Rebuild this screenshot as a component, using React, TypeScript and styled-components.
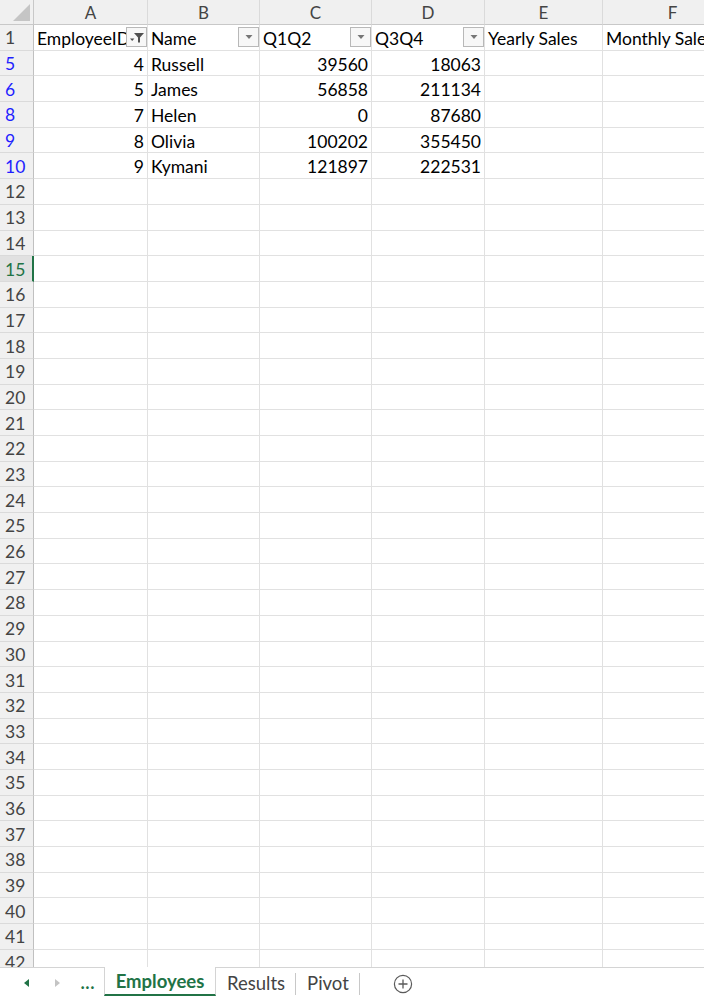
import React from "react";
import styled, { createGlobalStyle, css } from "styled-components";

const Global = createGlobalStyle`
  html, body {
    margin: 0;
    padding: 0;
    background: #ffffff;
  }
  body {
    font-family: Lato, "Open Sans", "Liberation Sans", sans-serif;
  }
`;

const Sheet = styled.div`
  display: flex;
  flex-direction: column;
  width: 704px;
  height: 999px;
  overflow: hidden;
`;

const Grid = styled.div`
  flex: 1;
  min-height: 0;
  overflow: hidden;
  display: grid;
  grid-template-columns: 34px 114px 112px 112px 113px 118px 140px;
  grid-template-rows: 25px;
  grid-auto-rows: 25.7px;
  align-content: start;
  width: 743px;
`;

const Corner = styled.div`
  position: relative;
  background: #f0f0f0;
  border-right: 1px solid #c8c8c8;
  border-bottom: 1px solid #c8c8c8;
  box-sizing: border-box;
  &::after {
    content: "";
    position: absolute;
    right: 3px;
    bottom: 3px;
    width: 0;
    height: 0;
    border-left: 17px solid transparent;
    border-bottom: 17px solid #c5c5c5;
  }
`;

const ColHead = styled.div`
  background: #f0f0f0;
  color: #444444;
  font-size: 17px;
  display: flex;
  align-items: center;
  justify-content: center;
  border-right: 1px solid #dadada;
  border-bottom: 1px solid #c8c8c8;
  box-sizing: border-box;
  padding-top: 1px;
`;

const RowHead = styled.div<{ $filtered?: boolean; $selected?: boolean }>`
  background: ${(p) => (p.$selected ? "#e1e1e1" : "#f0f0f0")};
  color: ${(p) => (p.$selected ? "#217346" : p.$filtered ? "#1f1fff" : "#444444")};
  font-size: 17.5px;
  display: flex;
  align-items: center;
  padding-left: 5px;
  padding-top: 1px;
  border-bottom: 1px solid #dadada;
  box-sizing: border-box;
  ${(p) =>
    p.$selected
      ? css`
          border-right: 2px solid #217346;
        `
      : css`
          border-right: 1px solid #c0c0c0;
        `}
`;

const Cell = styled.div<{ $num?: boolean }>`
  position: relative;
  font-size: 17.5px;
  color: #000000;
  display: flex;
  align-items: center;
  justify-content: ${(p) => (p.$num ? "flex-end" : "flex-start")};
  padding: 2px 3px 0 3px;
  border-right: 1px solid #e1e1e1;
  border-bottom: 1px solid #e1e1e1;
  box-sizing: border-box;
  white-space: nowrap;
  overflow: hidden;
`;

const FilterBtn = styled.span`
  position: absolute;
  right: 0;
  top: 2px;
  width: 21px;
  height: 20px;
  box-sizing: border-box;
  background: #f7f7f7;
  border: 1px solid #b8b8b8;
  display: flex;
  align-items: center;
  justify-content: center;
`;

const TabBar = styled.div`
  height: 32px;
  flex-shrink: 0;
  display: flex;
  align-items: stretch;
  border-top: 1px solid #d4d4d4;
  background: #ffffff;
  box-sizing: border-box;
  padding-left: 12px;
`;

const NavBtn = styled.div`
  width: 30px;
  display: flex;
  align-items: center;
  justify-content: center;
  margin-top: -1px;
`;

const More = styled.div`
  width: 32px;
  display: flex;
  align-items: center;
  justify-content: center;
  color: #217346;
  font-weight: 900;
  font-size: 16px;
  letter-spacing: 1px;
  padding-bottom: 2px;
`;

const Tab = styled.div<{ $active?: boolean }>`
  display: flex;
  align-items: center;
  justify-content: center;
  font-size: 18.5px;
  box-sizing: border-box;
  margin-top: -1px;
  ${(p) =>
    p.$active
      ? css`
          width: 112px;
          color: #217346;
          font-weight: 700;
          background: #ffffff;
          border-left: 1px solid #d4d4d4;
          border-right: 1px solid #d4d4d4;
          border-bottom: 2px solid #217346;
          margin-bottom: 3px;
        `
      : css`
          padding: 0 11px;
          color: #444444;
          position: relative;
          &::after {
            content: "";
            position: absolute;
            right: 0;
            top: 6px;
            bottom: 4px;
            border-right: 1px solid #c8c8c8;
          }
        `}
`;

const AddBtn = styled.div`
  display: flex;
  align-items: center;
  margin-left: 33px;
`;

const Funnel = () => (
  <svg width="16" height="13" viewBox="0 0 16 13">
    <path d="M5 2h10l-4 4.4v5h-2v-5z" fill="#505050" />
    <path d="M1 7.5h4.4l-2.2 2.6z" fill="#505050" />
  </svg>
);

const DownArrow = () => (
  <svg width="10" height="6" viewBox="0 0 10 6">
    <path d="M1.5 1h7l-3.5 4z" fill="#767676" />
  </svg>
);

const columns = ["A", "B", "C", "D", "E", "F"];

type Row = { n: number; id?: number; name?: string; h1?: number; h2?: number; filtered?: boolean };

const data: Row[] = [
  { n: 5, id: 4, name: "Russell", h1: 39560, h2: 18063, filtered: true },
  { n: 6, id: 5, name: "James", h1: 56858, h2: 211134, filtered: true },
  { n: 8, id: 7, name: "Helen", h1: 0, h2: 87680, filtered: true },
  { n: 9, id: 8, name: "Olivia", h1: 100202, h2: 355450, filtered: true },
  { n: 10, id: 9, name: "Kymani", h1: 121897, h2: 222531, filtered: true },
];

for (let i = 12; i <= 42; i++) data.push({ n: i });

const headers: { label: string; filter?: "funnel" | "arrow" }[] = [
  { label: "EmployeeID", filter: "funnel" },
  { label: "Name", filter: "arrow" },
  { label: "Q1Q2", filter: "arrow" },
  { label: "Q3Q4", filter: "arrow" },
  { label: "Yearly Sales" },
  { label: "Monthly Sales" },
];

function App() {
  return (
    <Sheet>
      <Global />
      <Grid>
        <Corner />
        {columns.map((c) => (
          <ColHead key={c}>{c}</ColHead>
        ))}

        <RowHead>1</RowHead>
        {headers.map((h) => (
          <Cell key={h.label}>
            {h.label}
            {h.filter && (
              <FilterBtn>{h.filter === "funnel" ? <Funnel /> : <DownArrow />}</FilterBtn>
            )}
          </Cell>
        ))}

        {data.map((r) => (
          <React.Fragment key={r.n}>
            <RowHead $filtered={r.filtered} $selected={r.n === 15}>
              {r.n}
            </RowHead>
            <Cell $num>{r.id}</Cell>
            <Cell>{r.name}</Cell>
            <Cell $num>{r.h1}</Cell>
            <Cell $num>{r.h2}</Cell>
            <Cell />
            <Cell />
          </React.Fragment>
        ))}
      </Grid>
      <TabBar>
        <NavBtn>
          <svg width="8" height="10" viewBox="0 0 8 10">
            <path d="M6 1v8L1 5z" fill="#217346" />
          </svg>
        </NavBtn>
        <NavBtn>
          <svg width="8" height="10" viewBox="0 0 8 10">
            <path d="M2 1v8l5-4z" fill="#c4c4c4" />
          </svg>
        </NavBtn>
        <More>...</More>
        <Tab $active>Employees</Tab>
        <Tab>Results</Tab>
        <Tab>Pivot</Tab>
        <AddBtn>
          <svg width="20" height="20" viewBox="0 0 20 20">
            <circle cx="10" cy="10" r="8.6" fill="none" stroke="#5a5a5a" strokeWidth="1.2" />
            <path d="M10 5.5v9M5.5 10h9" stroke="#5a5a5a" strokeWidth="1.3" />
          </svg>
        </AddBtn>
      </TabBar>
    </Sheet>
  );
}

export default App;
